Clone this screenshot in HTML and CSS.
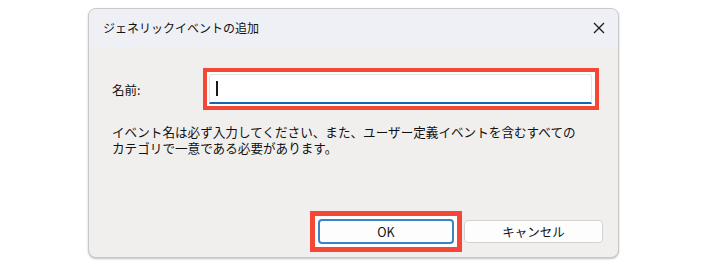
FILE: index.html
```html
<!DOCTYPE html>
<html lang="ja">
<head>
<meta charset="utf-8">
<title>ジェネリックイベントの追加</title>
<link rel="stylesheet" href="styles.css">
</head>
<body>
<div class="dialog">
  <div class="titlebar">
    <span class="title">ジェネリックイベントの追加</span>
    <svg class="close" width="12" height="12" viewBox="0 0 12 12"><path d="M1 1L11 11M11 1L1 11" stroke="#1a1a1a" stroke-width="1.3" fill="none"/></svg>
  </div>
  <div class="content">
    <div class="row">
      <span class="label">名前:</span>
      <div class="hl hl-input">
        <div class="input"><span class="caret"></span></div>
      </div>
    </div>
    <div class="desc">
      <div class="line">イベント名は必ず入力してください、また、ユーザー定義イベントを含むすべての</div>
      <div class="line">カテゴリで一意である必要があります。</div>
    </div>
    <div class="buttons">
      <div class="hl hl-btn"><div class="btn btn-ok">OK</div></div>
      <div class="btn btn-cancel">キャンセル</div>
    </div>
  </div>
</div>
</body>
</html>
```
FILE: styles.css
```css
html, body { margin: 0; padding: 0; }
body {
  background: #ffffff;
  width: 708px;
  height: 265px;
  padding: 8px 0 0 88px;
  box-sizing: border-box;
  font-family: "Noto Sans CJK JP", "Noto Sans", sans-serif;
  color: #111111;
}
.dialog {
  width: 531px;
  height: 250px;
  box-sizing: border-box;
  border: 1px solid #c8c8c8;
  border-radius: 8px;
  background: #f0efee;
  display: flex;
  flex-direction: column;
  overflow: hidden;
  box-shadow: 0 1px 2px rgba(0,0,0,0.25);
}
.titlebar {
  height: 38px;
  flex: none;
  background: #eff0f5;
  display: flex;
  align-items: center;
  justify-content: space-between;
  padding: 0 13px 0 14px;
}
.title {
  font-size: 12px;
  line-height: 16px;
}
.close { display: block; }
.content {
  flex: 1;
  display: flex;
  flex-direction: column;
  padding: 21px 15px 5px 23px;
}
.row {
  display: flex;
  align-items: center;
}
.label {
  width: 91px;
  font-size: 12.5px;
}
.hl {
  border: 4px solid #f44736;
  background: #ffffff;
}
.hl-input {
  width: 396px;
  box-sizing: border-box;
  padding: 2px 3px 2px 2px;
}
.input {
  height: 30px;
  box-sizing: border-box;
  border: 1px solid #e3e3e3;
  border-bottom: 2px solid #1366b3;
  border-radius: 3px 3px 0 0;
  background: #ffffff;
  display: flex;
  align-items: center;
  padding-left: 6px;
}
.caret {
  width: 2px;
  height: 15px;
  background: #1a1a1a;
}
.desc {
  margin: 14px 0 0 0;
  font-size: 12.6px;
}
.line {
  height: 16px;
  line-height: 16px;
  white-space: nowrap;
}
.buttons {
  margin-top: auto;
  display: flex;
  justify-content: flex-end;
  align-items: center;
  gap: 2px;
}
.hl-btn {
  border-width: 5px;
  padding: 3px;
}
.btn {
  display: flex;
  align-items: center;
  justify-content: center;
  box-sizing: border-box;
  border-radius: 4px;
  background: #fdfdfd;
  font-size: 12.5px;
}
.btn-ok {
  width: 136px;
  height: 25px;
  border: 2px solid #3d82c6;
}
.btn-cancel {
  width: 139px;
  height: 23px;
  border: 1px solid #d2d2d2;
}
```
